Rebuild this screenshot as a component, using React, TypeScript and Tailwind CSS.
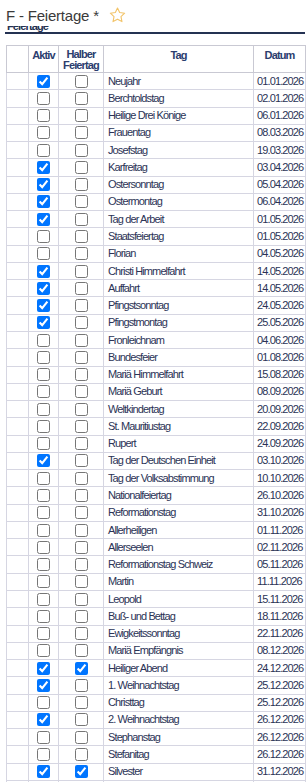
import React from "react";

type Row = { tag: string; datum: string; aktiv?: boolean; halb?: boolean };

const rows: Row[] = [
  { tag: "Neujahr", datum: "01.01.2026", aktiv: true },
  { tag: "Berchtoldstag", datum: "02.01.2026" },
  { tag: "Heilige Drei Könige", datum: "06.01.2026" },
  { tag: "Frauentag", datum: "08.03.2026" },
  { tag: "Josefstag", datum: "19.03.2026" },
  { tag: "Karfreitag", datum: "03.04.2026", aktiv: true },
  { tag: "Ostersonntag", datum: "05.04.2026", aktiv: true },
  { tag: "Ostermontag", datum: "06.04.2026", aktiv: true },
  { tag: "Tag der Arbeit", datum: "01.05.2026", aktiv: true },
  { tag: "Staatsfeiertag", datum: "01.05.2026" },
  { tag: "Florian", datum: "04.05.2026" },
  { tag: "Christi Himmelfahrt", datum: "14.05.2026", aktiv: true },
  { tag: "Auffahrt", datum: "14.05.2026", aktiv: true },
  { tag: "Pfingstsonntag", datum: "24.05.2026", aktiv: true },
  { tag: "Pfingstmontag", datum: "25.05.2026", aktiv: true },
  { tag: "Fronleichnam", datum: "04.06.2026" },
  { tag: "Bundesfeier", datum: "01.08.2026" },
  { tag: "Mariä Himmelfahrt", datum: "15.08.2026" },
  { tag: "Mariä Geburt", datum: "08.09.2026" },
  { tag: "Weltkindertag", datum: "20.09.2026" },
  { tag: "St. Mauritiustag", datum: "22.09.2026" },
  { tag: "Rupert", datum: "24.09.2026" },
  { tag: "Tag der Deutschen Einheit", datum: "03.10.2026", aktiv: true },
  { tag: "Tag der Volksabstimmung", datum: "10.10.2026" },
  { tag: "Nationalfeiertag", datum: "26.10.2026" },
  { tag: "Reformationstag", datum: "31.10.2026" },
  { tag: "Allerheiligen", datum: "01.11.2026" },
  { tag: "Allerseelen", datum: "02.11.2026" },
  { tag: "Reformationstag Schweiz", datum: "05.11.2026" },
  { tag: "Martin", datum: "11.11.2026" },
  { tag: "Leopold", datum: "15.11.2026" },
  { tag: "Buß- und Bettag", datum: "18.11.2026" },
  { tag: "Ewigkeitssonntag", datum: "22.11.2026" },
  { tag: "Mariä Empfängnis", datum: "08.12.2026" },
  { tag: "Heiliger Abend", datum: "24.12.2026", aktiv: true, halb: true },
  { tag: "1. Weihnachtstag", datum: "25.12.2026", aktiv: true },
  { tag: "Christtag", datum: "25.12.2026" },
  { tag: "2. Weihnachtstag", datum: "26.12.2026", aktiv: true },
  { tag: "Stephanstag", datum: "26.12.2026" },
  { tag: "Stefanitag", datum: "26.12.2026" },
  { tag: "Silvester", datum: "31.12.2026", aktiv: true, halb: true },
];

function Box({ checked }: { checked?: boolean }) {
  return (
    <input
      type="checkbox"
      defaultChecked={!!checked}
      className="m-0 block mx-auto w-[13px] h-[13px]"
    />
  );
}

export default function App() {
  return (
    <div className="w-[307px] bg-white font-['Liberation_Sans',Arial,sans-serif]">
      <div className="flex items-start pl-[6px] pt-[7px] h-[26px]">
        <span className="mt-[1px] text-[15px] leading-[15px] tracking-[-0.2px] text-[#3a3a3a]">F - Feiertage *</span>
        <svg width="17" height="16" viewBox="0 0 24 23" className="ml-[10px]">
          <polygon
            points="12,1.5 15.1,8 22.3,8.9 17,13.9 18.4,21 12,17.5 5.6,21 7,13.9 1.7,8.9 8.9,8"
            fill="none"
            stroke="#f2c46a"
            strokeWidth="1.6"
            strokeLinejoin="round"
          />
        </svg>
      </div>
      <div className="mx-[5px] w-[300px] border-b-2 border-[#243252]">
        <div className="h-[6px] overflow-hidden">
          <div className="-mt-[6px] pl-[2px] text-[11px] leading-[13px] tracking-[-0.08em] font-bold text-[#243252]">
            Feiertage
          </div>
        </div>
      </div>
      <table className="mt-[11px] ml-[6px] w-[299px] table-fixed border-collapse text-[11px] leading-[13px] tracking-[-0.08em] text-[#2b3356]">
        <colgroup>
          <col className="w-[22px]" />
          <col className="w-[30px]" />
          <col className="w-[45px]" />
          <col className="w-[150px]" />
          <col className="w-[52px]" />
        </colgroup>
        <thead>
          <tr className="h-[27px]">
            <th className="border border-[#c9c9d3]" />
            <th className="border border-[#c9c9d3] align-top pt-[3px] font-bold text-[#2b3d6e]">Aktiv</th>
            <th className="border border-[#c9c9d3] align-top pt-[3px] font-bold text-[#2b3d6e] leading-[11px]">
              Halber
              <br />
              Feiertag
            </th>
            <th className="border border-[#c9c9d3] align-top pt-[3px] font-bold text-[#2b3d6e]">Tag</th>
            <th className="border border-[#c9c9d3] align-top pt-[3px] font-bold text-[#2b3d6e]">Datum</th>
          </tr>
        </thead>
        <tbody>
          {rows.map((r) => (
            <tr key={r.tag} className="h-[17.27px]">
              <td className="border border-[#d6d6e2] p-0" />
              <td className="border border-[#d6d6e2] p-0">
                <Box checked={r.aktiv} />
              </td>
              <td className="border border-[#d6d6e2] p-0">
                <Box checked={r.halb} />
              </td>
              <td className="border border-[#d6d6e2] py-0 px-[4px] whitespace-nowrap overflow-hidden">{r.tag}</td>
              <td className="border border-[#d6d6e2] py-0 px-[3px] whitespace-nowrap">{r.datum}</td>
            </tr>
          ))}
          <tr className="h-[17px]">
            <td className="border border-[#d6d6e2] p-0" />
            <td className="border border-[#d6d6e2] p-0" />
            <td className="border border-[#d6d6e2] p-0" />
            <td className="border border-[#d6d6e2] p-0" />
            <td className="border border-[#d6d6e2] p-0" />
          </tr>
        </tbody>
      </table>
    </div>
  );
}
